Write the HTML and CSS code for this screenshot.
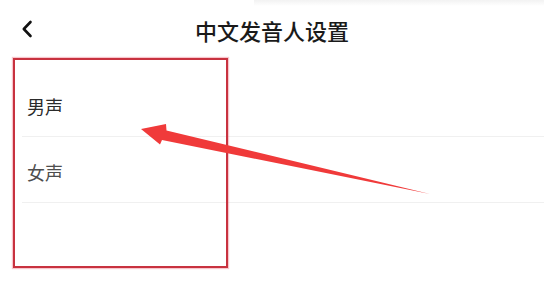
FILE: index.html
```html
<!DOCTYPE html>
<html lang="zh-CN">
<head>
    <meta charset="UTF-8">
    <meta name="viewport" content="width=device-width, initial-scale=1.0">
    <title>中文发音人设置</title>
    <link rel="stylesheet" href="styles.css">
</head>
<body>
    <div class="page">
        <div class="header">
            <div class="back">
                <svg width="12" height="18" viewBox="0 0 12 18">
                    <path d="M9.5 2 L2.8 9 L9.5 16" fill="none" stroke="#111" stroke-width="2.6" stroke-linecap="round" stroke-linejoin="round"/>
                </svg>
            </div>
            <h1 class="title">中文发音人设置</h1>
            <div></div>
        </div>

        <ul class="voice-list">
            <li class="voice-item selected">男声</li>
            <li class="voice-item">女声</li>
        </ul>

        <!-- annotation -->
        <div class="mark-box"></div>
        <svg class="mark-arrow" width="544" height="289" viewBox="0 0 544 289">
            <polygon points="141,129 166,124 166.5,130.5 430,194 162,140 160,144.5" fill="#f03a3a"/>
        </svg>
    </div>
</body>
</html>
```

FILE: styles.css
```css
body {
    margin: 0;
    background: #fff;
    font-family: "Noto Sans CJK SC", "Noto Sans", sans-serif;
}
.page {
    position: relative;
    width: 544px;
    height: 289px;
    overflow: hidden;
}
.header {
    display: grid;
    grid-template-columns: 1fr auto 1fr;
    align-items: center;
    height: 60px;
    background: linear-gradient(to bottom, #f2f2f2, #fff) no-repeat right top / 290px 6px;
}
.back {
    padding-left: 21px;
    margin-bottom: 2px;
    display: flex;
}
.title {
    margin: 0;
    font-size: 22px;
    font-weight: 500;
    line-height: 1;
    color: #1a1a1a;
}
.voice-list {
    list-style: none;
    margin: 11px 0 0 0;
    padding: 0;
}
.voice-item {
    display: flex;
    align-items: center;
    height: 66px;
    margin-left: 22px;
    padding: 4px 0 0 5px;
    box-sizing: border-box;
    border-bottom: 1px solid #f0f0f0;
    font-size: 18px;
    color: #4e4e4e;
}
.voice-item.selected {
    color: #2b2b2b;
}
.mark-box {
    position: absolute;
    left: 13px;
    top: 58px;
    width: 215px;
    height: 210px;
    box-sizing: border-box;
    border: 2px solid #c8323f;
    box-shadow: 0 0 1px 1px rgba(235, 90, 110, 0.35);
}
.mark-arrow {
    position: absolute;
    left: 0;
    top: 0;
}
```
